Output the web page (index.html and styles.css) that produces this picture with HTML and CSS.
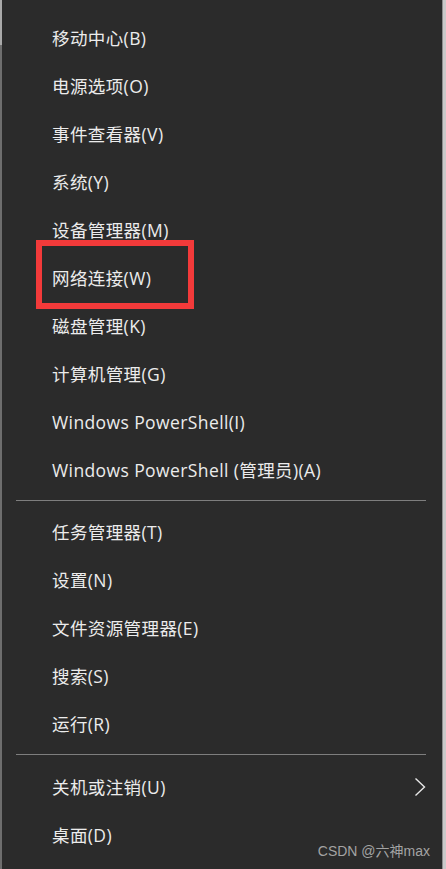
FILE: index.html
```html
<!DOCTYPE html>
<html lang="zh-CN">
<head>
<meta charset="utf-8">
<link rel="stylesheet" href="styles.css">
</head>
<body>
<div class="frame">
  <div class="edge-left"></div>
  <div class="menu">
    <div class="group">
      <div class="item">移动中心(B)</div>
      <div class="item">电源选项(O)</div>
      <div class="item">事件查看器(V)</div>
      <div class="item">系统(Y)</div>
      <div class="item">设备管理器(M)</div>
      <div class="item highlight">网络连接(W)<span class="mark"></span></div>
      <div class="item">磁盘管理(K)</div>
      <div class="item">计算机管理(G)</div>
      <div class="item">Windows PowerShell(I)</div>
      <div class="item">Windows PowerShell (管理员)(A)</div>
    </div>
    <div class="sep sep1"></div>
    <div class="group">
      <div class="item">任务管理器(T)</div>
      <div class="item">设置(N)</div>
      <div class="item">文件资源管理器(E)</div>
      <div class="item">搜索(S)</div>
      <div class="item">运行(R)</div>
    </div>
    <div class="sep sep2"></div>
    <div class="group">
      <div class="item sub">关机或注销(U)
        <svg class="chev" width="12" height="20" viewBox="0 0 12 20"><path d="M1.5 1.5 L10.5 10 L1.5 18.5" fill="none" stroke="#e8e8e8" stroke-width="1.4"/></svg>
      </div>
      <div class="item">桌面(D)</div>
    </div>
    <div class="watermark">CSDN @六神max</div>
  </div>
  <div class="edge-right"></div>
</div>
</body>
</html>
```
FILE: styles.css
```css
html, body {
  margin: 0;
  padding: 0;
  background: #2b2b2b;
}
.frame {
  display: flex;
  width: 446px;
  height: 869px;
  overflow: hidden;
}
.edge-left {
  width: 2px;
  background: linear-gradient(#a9a9a9 0, #a9a9a9 45px, #6e6e6e 45px);
}
.edge-right {
  width: 4px;
  background: linear-gradient(to right, #8e8e8e 0, #8e8e8e 1px, #c9c9c9 1px);
}
.menu {
  flex: 1;
  position: relative;
  background: #2b2b2b;
  padding-top: 14px;
  font-family: "Open Sans", "Noto Sans CJK SC", sans-serif;
  font-size: 17.5px;
  letter-spacing: 0.4px;
  color: #ececec;
}
.group {
  display: flex;
  flex-direction: column;
}
.item {
  position: relative;
  height: 48px;
  line-height: 48px;
  padding-left: 50px;
  white-space: nowrap;
}
.mark {
  position: absolute;
  left: 34px;
  top: -14px;
  width: 146px;
  height: 57px;
  border: 6px solid #f23a3a;
}
.sep {
  height: 1px;
  background: #7e7e7e;
  margin-left: 14px;
  margin-right: 16px;
}
.sep1 {
  margin-top: 6px;
  margin-bottom: 7px;
}
.sep2 {
  margin-top: 6px;
  margin-bottom: 8px;
}
.chev {
  position: absolute;
  right: 16px;
  top: 14px;
}
.watermark {
  position: absolute;
  right: 12px;
  bottom: 9px;
  font-family: "Liberation Sans", "Noto Sans CJK SC", sans-serif;
  font-size: 14px;
  letter-spacing: 0;
  color: #a3a3a3;
}
```
